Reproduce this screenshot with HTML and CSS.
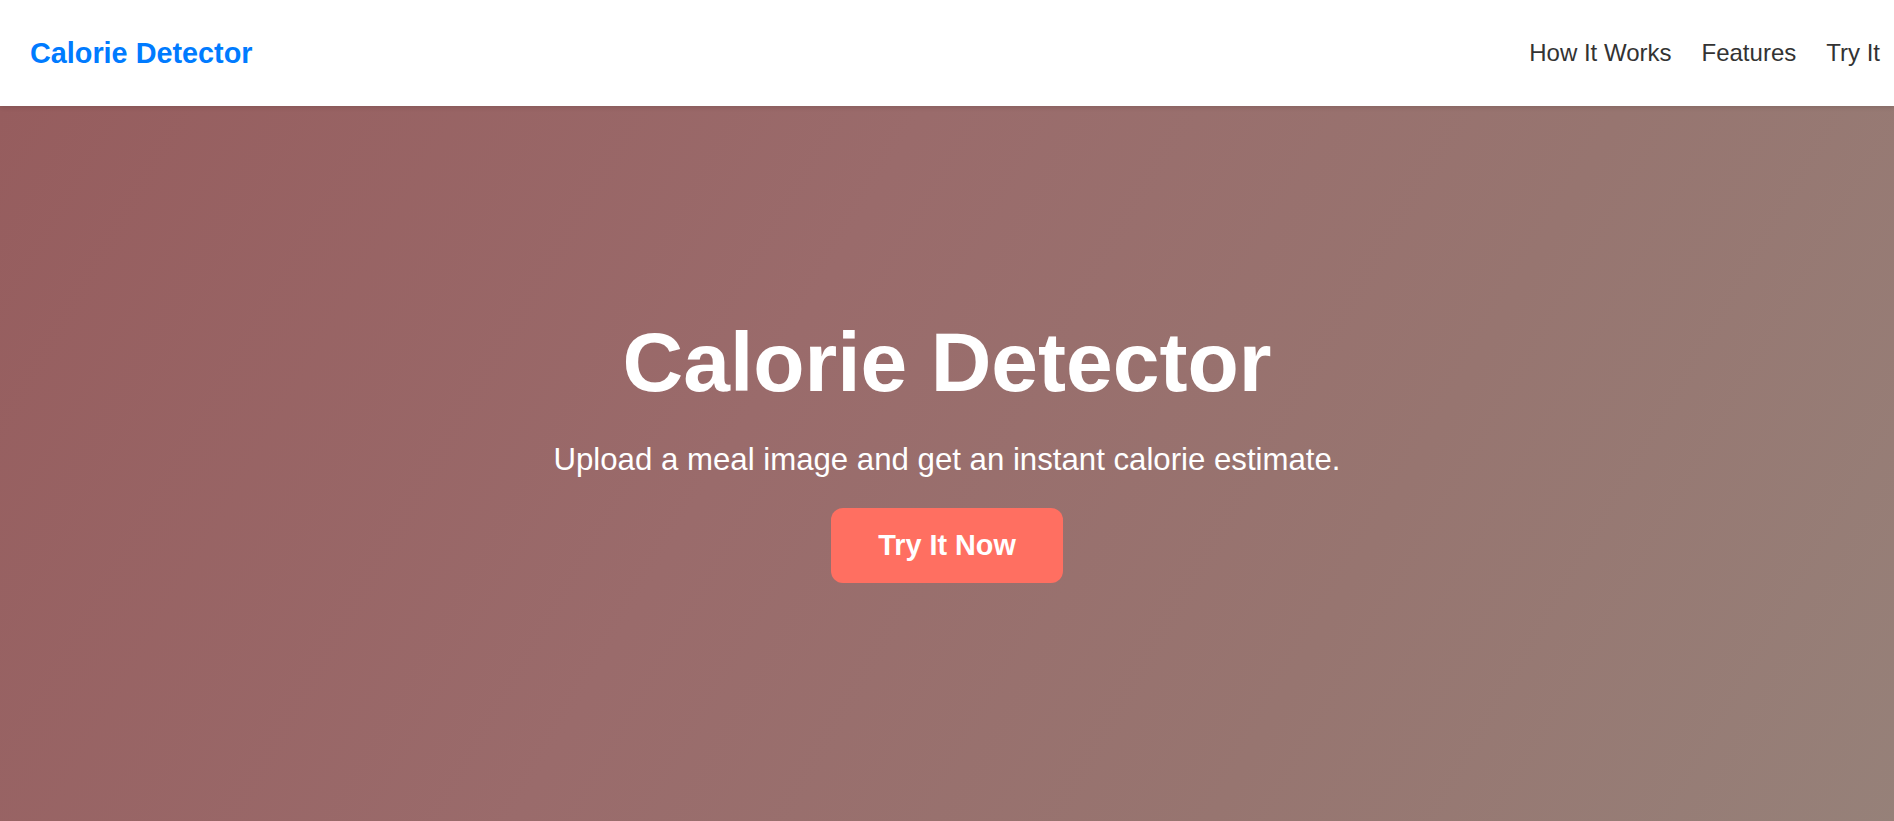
FILE: index.html
```html
<!DOCTYPE html>
<html lang="en">
<head>
<meta charset="utf-8">
<title>Calorie Detector</title>
<link rel="stylesheet" href="styles.css">
</head>
<body>
<header class="site-header">
  <a class="logo" href="#">Calorie Detector</a>
  <nav class="nav">
    <a href="#how">How It Works</a>
    <a href="#features">Features</a>
    <a href="#try">Try It</a>
  </nav>
</header>
<section class="hero">
  <h1 class="hero-title">Calorie Detector</h1>
  <p class="hero-sub">Upload a meal image and get an instant calorie estimate.</p>
  <a class="cta" href="#try">Try It Now</a>
</section>
</body>
</html>
```
FILE: styles.css
```css
* { box-sizing: border-box; }
html, body { margin: 0; padding: 0; }
body {
  font-family: "Liberation Sans", Arial, sans-serif;
  background: #ffffff;
  overflow: hidden;
}
.site-header {
  height: 106px;
  display: flex;
  align-items: center;
  justify-content: space-between;
  padding: 0 14px 0 30px;
  background: #ffffff;
  position: relative;
  z-index: 1;
  box-shadow: 0 2px 4px rgba(0,0,0,0.1);
}
.logo {
  font-size: 28.8px;
  font-weight: bold;
  color: #007bff;
  text-decoration: none;
}
.nav {
  display: flex;
  gap: 30px;
}
.nav a {
  font-size: 24px;
  color: #333333;
  text-decoration: none;
}
.hero {
  min-height: 740px;
  display: flex;
  flex-direction: column;
  align-items: center;
  padding-top: 208px;
  background: linear-gradient(120deg, #965d5e 0%, #9a6b6b 40%, #977570 70%, #968179 100%);
  color: #ffffff;
  text-align: center;
}
.hero-title {
  margin: 0;
  font-size: 84px;
  font-weight: bold;
  line-height: normal;
}
.hero-sub {
  margin: 31px 0 0;
  font-size: 31.2px;
  line-height: normal;
}
.cta {
  margin-top: 30px;
  display: inline-block;
  padding: 21px 47px;
  background: #ff6f61;
  color: #ffffff;
  font-size: 28.8px;
  font-weight: bold;
  text-decoration: none;
  border-radius: 12px;
  line-height: normal;
}
```
